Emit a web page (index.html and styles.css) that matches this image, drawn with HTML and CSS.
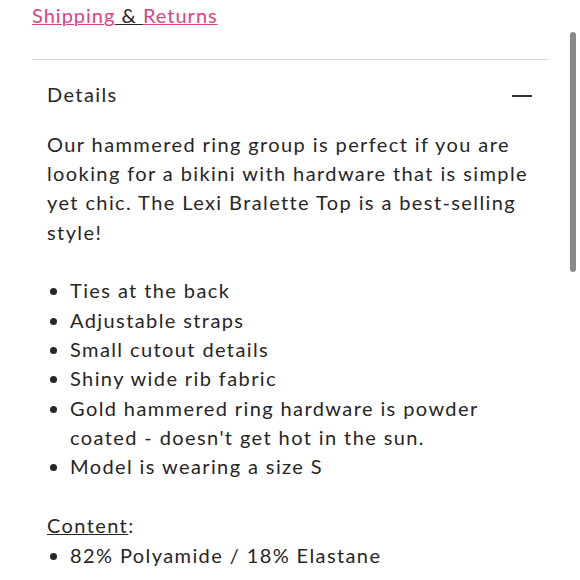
FILE: index.html
```html
<!DOCTYPE html>
<html lang="en">
<head>
<meta charset="utf-8">
<title>Details</title>
<link rel="stylesheet" href="styles.css">
</head>
<body>
<div class="page">
  <p class="tabs"><a class="tab-link" href="#">Shipping</a><span class="tab-sep"> &amp; </span><a class="tab-link" href="#">Returns</a></p>
  <section class="accordion">
    <div class="acc-head">
      <span class="acc-title">Details</span>
      <span class="acc-minus"></span>
    </div>
    <div class="acc-body">
      <p class="acc-text">Our hammered ring group is perfect if you are looking for a bikini with hardware that is simple yet chic. The Lexi Bralette Top is a best-selling style!</p>
      <ul class="acc-list">
        <li>Ties at the back</li>
        <li>Adjustable straps</li>
        <li>Small cutout details</li>
        <li>Shiny wide rib fabric</li>
        <li>Gold hammered ring hardware is powder coated - doesn't get hot in the sun.</li>
        <li>Model is wearing a size S</li>
      </ul>
      <p class="acc-label"><span class="acc-label-u">Content</span>:</p>
      <ul class="acc-list acc-list-tight">
        <li>82% Polyamide / 18% Elastane</li>
      </ul>
    </div>
  </section>
</div>
<div class="scrollbar"></div>
</body>
</html>
```
FILE: styles.css
```css
html, body {
  margin: 0;
  padding: 0;
  background: #ffffff;
}
body {
  font-family: Lato, "Open Sans", sans-serif;
  font-size: 20px;
  line-height: 29.35px;
  letter-spacing: 1.4px;
  color: #262626;
  overflow: hidden;
  height: 580px;
}
.page {
  width: 517px;
  padding-left: 32px;
}
.tabs {
  margin: 1px 0 29px;
  letter-spacing: 1px;
}
.tab-link {
  color: #d6457f;
  text-decoration: underline;
  text-decoration-thickness: 1px;
}
.tab-sep {
  color: #262626;
  text-decoration: underline;
  text-decoration-thickness: 1px;
}
.accordion {
  border-top: 1px solid #d6d6d6;
  padding: 20px 17px 0 15px;
}
.acc-head {
  display: flex;
  justify-content: space-between;
  align-items: center;
}
.acc-minus {
  width: 20px;
  height: 1.5px;
  background: #333;
  margin-top: 2px;
}
.acc-body {
  padding-top: 20px;
}
.acc-text {
  margin: 0 0 29.35px;
}
.acc-list {
  margin: 0 0 29.35px;
  padding-left: 23px;
  list-style: disc;
}
.acc-list-tight {
  margin: 0;
}
.acc-label {
  margin: 0;
}
.acc-label-u {
  text-decoration: underline;
  text-decoration-thickness: 1px;
}
.scrollbar {
  position: absolute;
  left: 570px;
  top: 32px;
  width: 6px;
  height: 240px;
  border-radius: 3px;
  background: #8a8a8a;
}
```
